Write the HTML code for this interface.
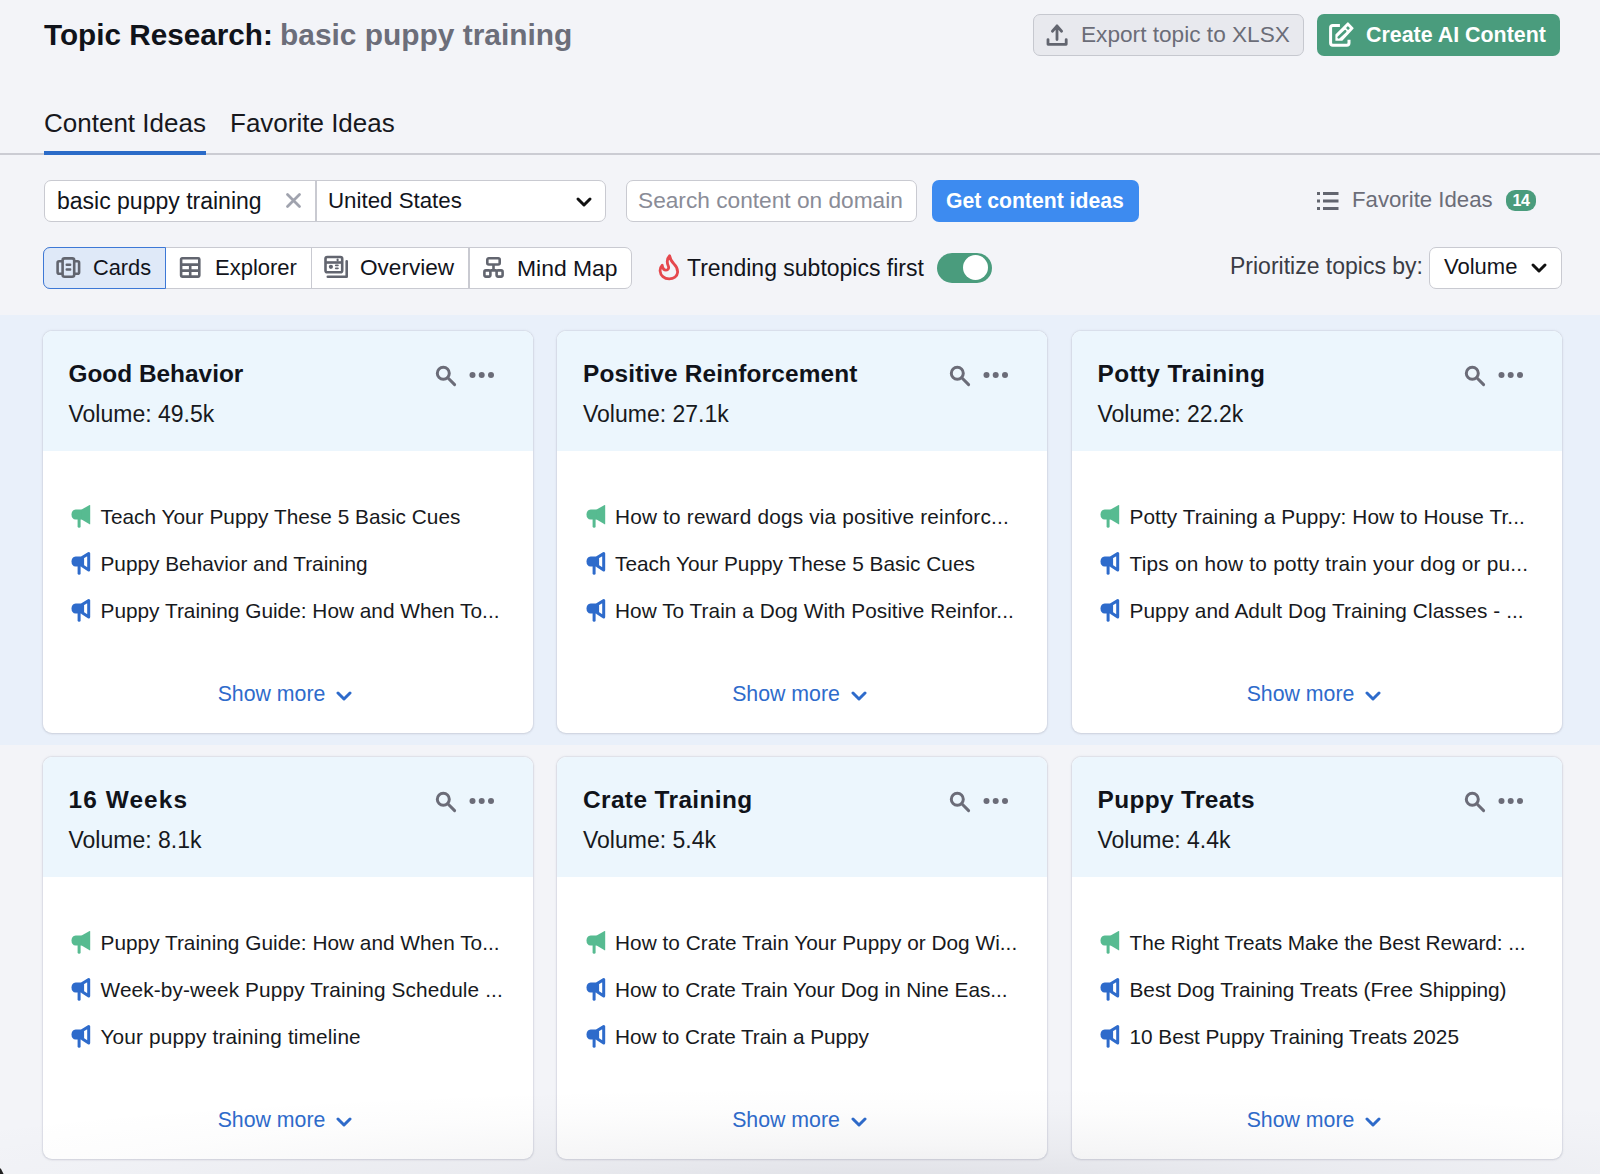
<!DOCTYPE html>
<html><head><meta charset="utf-8"><style>
*{box-sizing:border-box;margin:0;padding:0}
html,body{width:1600px;height:1174px;overflow:hidden}
body{position:relative;background:#f3f4f8;font-family:"Liberation Sans", sans-serif;color:#12141b}
.abs{position:absolute;white-space:nowrap}
.title{left:44px;top:16.5px;font-size:30px;font-weight:bold;line-height:36px;color:#10131a}
.title span{color:#6c6e7a}
.btn{position:absolute;border-radius:7px;height:42px;top:13.5px}
.exp{left:1033px;width:271px;background:#e8e9ee;border:1.5px solid #c6c8cf}
.cai{left:1317px;width:243px;background:#4a9c7d}
.tabs{top:107px;font-size:26px;line-height:32px}
.uline{position:absolute;left:44px;top:151px;width:162px;height:4px;background:#2b6bc8}
.gline{position:absolute;left:0;top:153px;width:1600px;height:2px;background:#cbccd3}
.inp{position:absolute;top:180px;height:42px;background:#fff;border:1.5px solid #c9cad1;border-radius:7px}
.band{position:absolute;left:0;top:315px;width:1600px;height:430px;background:#e9f0fa}
.card{position:absolute;width:490px;height:402px;background:#fff;border-radius:9px;box-shadow:0 0 0 1px rgba(205,208,218,.25),0 0 2px 1px rgba(175,178,192,.22),0 1px 2px rgba(150,152,165,.2);overflow:hidden}
.ch{position:absolute;left:0;top:0;width:100%;height:120px;background:#ecf6fd}
.ct{position:absolute;left:26px;top:28px;font-size:24.4px;font-weight:bold;line-height:30px;white-space:nowrap;color:#10131a}
.cv{position:absolute;left:26px;top:69px;font-size:23px;line-height:28px;white-space:nowrap;color:#171920}
.srch{position:absolute;left:392px;top:34px}
.dots{position:absolute;left:426px;top:39px}
.it{position:absolute;left:29px;height:26px;white-space:nowrap}
.mi{position:absolute;left:-0.2px;top:0}
.itx{position:absolute;left:29px;top:0.2px;font-size:20.8px;line-height:26px;color:#171920}
.sm{position:absolute;left:-2.5px;width:100%;top:349.5px;text-align:center;font-size:21.3px;line-height:26px;color:#2e6bcb;white-space:nowrap}
.seg{position:absolute;top:247px;height:42px;background:#fff;border:1.5px solid #c9cad1;border-radius:7px;left:43px;width:589px;overflow:hidden}
.lbl{font-size:22px;line-height:28px}
</style></head><body>
<div class="abs title" style="font-size:29.7px">Topic Research:</div><div class="abs title" style="left:280px;color:#6c6e7a;font-size:29.9px">basic puppy training</div>

<div class="btn exp"></div>
<svg class="abs" style="left:1044px;top:22px" width="26" height="26" viewBox="0 0 26 26"><path d="M13 4 L13 17.6 M8.4 9.2 L13 4 L17.6 9.2" fill="none" stroke="#62656f" stroke-width="2.8" stroke-linecap="round" stroke-linejoin="round"/><path d="M4 17.6 L4 22.3 L22.2 22.3 L22.2 17.6" fill="none" stroke="#62656f" stroke-width="2.8" stroke-linecap="round" stroke-linejoin="round"/></svg>
<div class="abs lbl" style="left:1081px;top:20px;color:#6b6d78;font-size:22.65px">Export topic to XLSX</div>
<div class="btn cai"></div>
<svg class="abs" style="left:1326px;top:20px" width="32" height="30" viewBox="0 0 32 30"><path d="M13.9 5.6 L6.8 5.6 Q4.6 5.6 4.6 7.8 L4.6 23.1 Q4.6 25.3 6.8 25.3 L20.8 25.3 Q23 25.3 23 23.1 L23 19.7" fill="none" stroke="#fff" stroke-width="3"/><path d="M9.4 20.8 L9.4 14.5 L21.4 2.6 Q21.9 2.1 22.4 2.6 L27.4 7.8 Q27.9 8.3 27.4 8.8 L16.3 20.8 Z" fill="#fff"/><path d="M12.7 17.4 L19.2 11.2" stroke="#4a9c7d" stroke-width="2.6" stroke-linecap="round"/><rect x="20.5" y="6.8" width="3" height="2.6" rx=".6" transform="rotate(45 22 8.1)" fill="#4a9c7d"/></svg>
<div class="abs lbl" style="left:1366px;top:21px;color:#fff;font-weight:bold;font-size:21.4px">Create AI Content</div>

<div class="abs tabs" style="left:44px;color:#17181d">Content Ideas</div>
<div class="abs tabs" style="left:230px;color:#17181d">Favorite Ideas</div>
<div class="gline"></div>
<div class="uline"></div>

<div class="inp" style="left:44px;width:562px"></div>
<div class="abs" style="left:315px;top:181px;width:1.5px;height:40px;background:#c9cad1"></div>
<div class="abs lbl" style="left:57px;top:187px;font-size:23px">basic puppy training</div>
<svg class="abs" style="left:284px;top:192px" width="18" height="18" viewBox="0 0 18 18"><path d="M3.5 2.6 L15.5 14.6 M15.5 2.6 L3.5 14.6" stroke="#a0a3ae" stroke-width="2.8" stroke-linecap="round"/></svg>
<div class="abs lbl" style="left:328px;top:187px;font-size:22.3px">United States</div>
<svg class="abs" style="left:575px;top:195px" width="18" height="14" viewBox="0 0 18 14"><path d="M3 4 L9 10 L15 4" fill="none" stroke="#111" stroke-width="3" stroke-linecap="round" stroke-linejoin="round"/></svg>

<div class="inp" style="left:625.5px;width:291px"></div>
<div class="abs lbl" style="left:638px;top:186px;font-size:22.7px;color:#8a8c97">Search content on domain</div>
<div class="btn" style="left:932px;top:180px;width:207px;height:42px;background:#3d8bf0"></div>
<div class="abs lbl" style="left:946px;top:187.2px;color:#fff;font-weight:bold;font-size:21.2px">Get content ideas</div>

<svg class="abs" style="left:1315px;top:189px" width="26" height="24" viewBox="0 0 26 24"><g fill="#62656f"><rect x="2" y="3" width="3" height="3"/><rect x="2" y="10.5" width="3" height="3"/><rect x="2" y="18" width="3" height="3"/><rect x="8" y="3" width="15.5" height="3"/><rect x="8" y="10.5" width="15.5" height="3"/><rect x="8" y="18" width="15.5" height="3"/></g></svg>
<div class="abs lbl" style="left:1352px;top:186px;color:#6b6d78;font-size:22.2px">Favorite Ideas</div>
<div class="abs" style="left:1506px;top:190px;width:30px;height:21px;border-radius:9px;background:#4a9c7d;color:#fff;font-size:16px;font-weight:bold;line-height:21px;text-align:center;letter-spacing:-0.3px">14</div>

<div class="seg"></div>
<div class="abs" style="left:43px;top:247px;width:123px;height:42px;background:#dfe9f8;border:1.5px solid #3d78d6;border-radius:7px 0 0 7px"></div>
<div class="abs" style="left:310.5px;top:248px;width:1.5px;height:40px;background:#c9cad1"></div>
<div class="abs" style="left:468px;top:248px;width:1.5px;height:40px;background:#c9cad1"></div>
<svg class="abs" style="left:54px;top:255px" width="28" height="24" viewBox="0 0 28 24"><g fill="none" stroke="#62656f" stroke-width="2.6" stroke-linejoin="round"><rect x="8.6" y="3.4" width="11.6" height="18.3" rx="2"/><path d="M8.6 6.3 L5.1 6.3 Q3.6 6.3 3.6 7.8 L3.6 17.3 Q3.6 18.8 5.1 18.8 L8.6 18.8"/><path d="M20.2 6.3 L23.6 6.3 Q25.1 6.3 25.1 7.8 L25.1 17.3 Q25.1 18.8 23.6 18.8 L20.2 18.8"/></g><g stroke="#62656f" stroke-width="2.4" stroke-linecap="round"><path d="M12.7 9.8 L16.2 9.8 M12.7 14.5 L16.2 14.5"/></g></svg>
<div class="abs lbl" style="left:93px;top:253.5px;font-size:21.8px">Cards</div>
<svg class="abs" style="left:178px;top:255px" width="24" height="24" viewBox="0 0 24 24"><g fill="none" stroke="#62656f" stroke-width="2.6"><rect x="3.1" y="3.3" width="18.2" height="18.3" rx="1"/><path d="M3.1 9.6 L21.3 9.6 M3.1 15.6 L21.3 15.6 M12.2 9.6 L12.2 21.6"/></g></svg>
<div class="abs lbl" style="left:215px;top:253.5px">Explorer</div>
<svg class="abs" style="left:322px;top:254px" width="28" height="26" viewBox="0 0 28 26"><g fill="none" stroke="#62656f" stroke-width="2.6" stroke-linejoin="round"><rect x="3.5" y="3" width="16.7" height="15.2" rx="1.8"/><path d="M3.5 8.5 L20.2 8.5"/><path d="M5.8 22.7 L24.7 22.7 L24.7 7.3" stroke-linecap="round"/></g><g fill="#62656f"><circle cx="8.9" cy="12.8" r="2.1"/><rect x="12.9" y="10.45" width="3.9" height="1.8" rx=".9"/><rect x="12.9" y="13.4" width="3.9" height="1.8" rx=".9"/><rect x="14.6" y="4.6" width="2" height="3" rx="1"/></g></svg>
<div class="abs lbl" style="left:360px;top:253.5px;font-size:22.6px">Overview</div>
<svg class="abs" style="left:481px;top:255px" width="26" height="26" viewBox="0 0 26 26"><g fill="none" stroke="#62656f" stroke-width="2.6" stroke-linejoin="round"><rect x="6.3" y="3.3" width="12.4" height="6.2" rx="1.5"/><rect x="3.4" y="15.4" width="6" height="6.2" rx="1.5"/><rect x="15.6" y="15.4" width="6" height="6.2" rx="1.5"/><path d="M12.5 9.5 L12.5 15.4 M9.4 15.4 L15.6 15.4"/></g></svg>
<div class="abs lbl" style="left:517px;top:253.5px;font-size:22.9px">Mind Map</div>

<svg class="abs" style="left:656px;top:253px" width="26" height="28" viewBox="0 0 26 28"><path d="M13.6 2.8 C14.2 6.5 15.5 8.6 18 11 C20.6 13.5 21.8 16 21.6 19.4 C21.3 23.4 17.5 25.8 13.2 25.8 C8.2 25.8 4.4 22.5 4.1 18 C4 15.8 4.8 13.6 6.2 12.2 C6.6 14.8 8 17.2 10 17.2 C12.2 17.2 13.2 15.2 12.3 13 C11 10 10.6 6 13.6 2.8 Z" fill="none" stroke="#e5484d" stroke-width="2.8" stroke-linejoin="round"/></svg>
<div class="abs lbl" style="left:687px;top:253.5px;font-size:23px">Trending subtopics first</div>
<div class="abs" style="left:937px;top:252.5px;width:55px;height:30px;border-radius:15px;background:#4a9c7d"></div>
<div class="abs" style="left:963px;top:255px;width:25px;height:25px;border-radius:50%;background:#fff"></div>

<div class="abs lbl" style="left:1230px;top:252px;color:#3a3c45;font-size:23px">Prioritize topics by:</div>
<div class="inp" style="left:1429px;top:247px;width:133px;height:42px"></div>
<div class="abs lbl" style="left:1444px;top:253px;font-size:22px">Volume</div>
<svg class="abs" style="left:1530px;top:261px" width="18" height="14" viewBox="0 0 18 14"><path d="M3 4 L9 10 L15 4" fill="none" stroke="#111" stroke-width="3" stroke-linecap="round" stroke-linejoin="round"/></svg>

<div class="band"></div>
<div class="card" style="left:42.5px;top:331px">
<div class="ch"><div class="ct" style="letter-spacing:0px">Good Behavior</div><div class="cv">Volume: 49.5k</div>
<svg class="srch" width="24" height="24" viewBox="0 0 24 24"><circle cx="8.3" cy="8.3" r="6" fill="none" stroke="#6b6c78" stroke-width="3"/><path d="M12.8 12.8 L19.6 19.6" stroke="#6b6c78" stroke-width="3" stroke-linecap="round"/></svg>
<svg class="dots" width="26" height="10" viewBox="0 0 26 10"><circle cx="3.5" cy="5" r="3" fill="#6b6c78"/><circle cx="12.7" cy="5" r="3" fill="#6b6c78"/><circle cx="22" cy="5" r="3" fill="#6b6c78"/></svg>
</div>
<div class="it" style="top:173px"><span class="mi"><svg width="20" height="24" viewBox="0 0 20 24"><path d="M4.6 5.5 L11.3 5.5 L11.3 15.6 L4.6 15.6 Q0.6 15.2 0.5 10.5 Q0.6 5.9 4.6 5.5 Z" fill="#57bb91"/><path d="M10.6 5.6 L18.6 1.1 Q19.2 0.9 19.2 1.6 L19.2 19.9 Q19.2 20.6 18.6 20.3 L10.6 15.6 Z" fill="#57bb91"/><path d="M8.1 15.5 L8.1 22.3" stroke="#57bb91" stroke-width="3" stroke-linecap="round"/></svg></span><span class="itx" style="letter-spacing:0.021px">Teach Your Puppy These 5 Basic Cues</span></div><div class="it" style="top:220px"><span class="mi"><svg width="20" height="24" viewBox="0 0 20 24"><path d="M4.6 5.5 L11.3 5.5 L11.3 15.6 L4.6 15.6 Q0.6 15.2 0.5 10.5 Q0.6 5.9 4.6 5.5 Z" fill="#2e6bcb"/><path d="M11.6 6.3 L17.7 2.6 L17.7 18.9 L11.6 14.9 Z" fill="none" stroke="#2e6bcb" stroke-width="3" stroke-linejoin="round"/><path d="M8.1 15.5 L8.1 22.3" stroke="#2e6bcb" stroke-width="3" stroke-linecap="round"/></svg></span><span class="itx" style="letter-spacing:0.0px">Puppy Behavior and Training</span></div><div class="it" style="top:267px"><span class="mi"><svg width="20" height="24" viewBox="0 0 20 24"><path d="M4.6 5.5 L11.3 5.5 L11.3 15.6 L4.6 15.6 Q0.6 15.2 0.5 10.5 Q0.6 5.9 4.6 5.5 Z" fill="#2e6bcb"/><path d="M11.6 6.3 L17.7 2.6 L17.7 18.9 L11.6 14.9 Z" fill="none" stroke="#2e6bcb" stroke-width="3" stroke-linejoin="round"/><path d="M8.1 15.5 L8.1 22.3" stroke="#2e6bcb" stroke-width="3" stroke-linecap="round"/></svg></span><span class="itx" style="letter-spacing:0.013px">Puppy Training Guide: How and When To...</span></div>
<div class="sm">Show more<svg width="16" height="10" viewBox="0 0 16 10" style="margin-left:11px"><path d="M2 2 L8 8 L14 2" fill="none" stroke="#2e6bcb" stroke-width="3" stroke-linecap="round" stroke-linejoin="round"/></svg></div>
</div><div class="card" style="left:557px;top:331px">
<div class="ch"><div class="ct" style="letter-spacing:0.16px">Positive Reinforcement</div><div class="cv">Volume: 27.1k</div>
<svg class="srch" width="24" height="24" viewBox="0 0 24 24"><circle cx="8.3" cy="8.3" r="6" fill="none" stroke="#6b6c78" stroke-width="3"/><path d="M12.8 12.8 L19.6 19.6" stroke="#6b6c78" stroke-width="3" stroke-linecap="round"/></svg>
<svg class="dots" width="26" height="10" viewBox="0 0 26 10"><circle cx="3.5" cy="5" r="3" fill="#6b6c78"/><circle cx="12.7" cy="5" r="3" fill="#6b6c78"/><circle cx="22" cy="5" r="3" fill="#6b6c78"/></svg>
</div>
<div class="it" style="top:173px"><span class="mi"><svg width="20" height="24" viewBox="0 0 20 24"><path d="M4.6 5.5 L11.3 5.5 L11.3 15.6 L4.6 15.6 Q0.6 15.2 0.5 10.5 Q0.6 5.9 4.6 5.5 Z" fill="#57bb91"/><path d="M10.6 5.6 L18.6 1.1 Q19.2 0.9 19.2 1.6 L19.2 19.9 Q19.2 20.6 18.6 20.3 L10.6 15.6 Z" fill="#57bb91"/><path d="M8.1 15.5 L8.1 22.3" stroke="#57bb91" stroke-width="3" stroke-linecap="round"/></svg></span><span class="itx" style="letter-spacing:0.183px">How to reward dogs via positive reinforc...</span></div><div class="it" style="top:220px"><span class="mi"><svg width="20" height="24" viewBox="0 0 20 24"><path d="M4.6 5.5 L11.3 5.5 L11.3 15.6 L4.6 15.6 Q0.6 15.2 0.5 10.5 Q0.6 5.9 4.6 5.5 Z" fill="#2e6bcb"/><path d="M11.6 6.3 L17.7 2.6 L17.7 18.9 L11.6 14.9 Z" fill="none" stroke="#2e6bcb" stroke-width="3" stroke-linejoin="round"/><path d="M8.1 15.5 L8.1 22.3" stroke="#2e6bcb" stroke-width="3" stroke-linecap="round"/></svg></span><span class="itx" style="letter-spacing:0.021px">Teach Your Puppy These 5 Basic Cues</span></div><div class="it" style="top:267px"><span class="mi"><svg width="20" height="24" viewBox="0 0 20 24"><path d="M4.6 5.5 L11.3 5.5 L11.3 15.6 L4.6 15.6 Q0.6 15.2 0.5 10.5 Q0.6 5.9 4.6 5.5 Z" fill="#2e6bcb"/><path d="M11.6 6.3 L17.7 2.6 L17.7 18.9 L11.6 14.9 Z" fill="none" stroke="#2e6bcb" stroke-width="3" stroke-linejoin="round"/><path d="M8.1 15.5 L8.1 22.3" stroke="#2e6bcb" stroke-width="3" stroke-linecap="round"/></svg></span><span class="itx" style="letter-spacing:0.036px">How To Train a Dog With Positive Reinfor...</span></div>
<div class="sm">Show more<svg width="16" height="10" viewBox="0 0 16 10" style="margin-left:11px"><path d="M2 2 L8 8 L14 2" fill="none" stroke="#2e6bcb" stroke-width="3" stroke-linecap="round" stroke-linejoin="round"/></svg></div>
</div><div class="card" style="left:1071.5px;top:331px">
<div class="ch"><div class="ct" style="letter-spacing:0.36px">Potty Training</div><div class="cv">Volume: 22.2k</div>
<svg class="srch" width="24" height="24" viewBox="0 0 24 24"><circle cx="8.3" cy="8.3" r="6" fill="none" stroke="#6b6c78" stroke-width="3"/><path d="M12.8 12.8 L19.6 19.6" stroke="#6b6c78" stroke-width="3" stroke-linecap="round"/></svg>
<svg class="dots" width="26" height="10" viewBox="0 0 26 10"><circle cx="3.5" cy="5" r="3" fill="#6b6c78"/><circle cx="12.7" cy="5" r="3" fill="#6b6c78"/><circle cx="22" cy="5" r="3" fill="#6b6c78"/></svg>
</div>
<div class="it" style="top:173px"><span class="mi"><svg width="20" height="24" viewBox="0 0 20 24"><path d="M4.6 5.5 L11.3 5.5 L11.3 15.6 L4.6 15.6 Q0.6 15.2 0.5 10.5 Q0.6 5.9 4.6 5.5 Z" fill="#57bb91"/><path d="M10.6 5.6 L18.6 1.1 Q19.2 0.9 19.2 1.6 L19.2 19.9 Q19.2 20.6 18.6 20.3 L10.6 15.6 Z" fill="#57bb91"/><path d="M8.1 15.5 L8.1 22.3" stroke="#57bb91" stroke-width="3" stroke-linecap="round"/></svg></span><span class="itx" style="letter-spacing:0.085px">Potty Training a Puppy: How to House Tr...</span></div><div class="it" style="top:220px"><span class="mi"><svg width="20" height="24" viewBox="0 0 20 24"><path d="M4.6 5.5 L11.3 5.5 L11.3 15.6 L4.6 15.6 Q0.6 15.2 0.5 10.5 Q0.6 5.9 4.6 5.5 Z" fill="#2e6bcb"/><path d="M11.6 6.3 L17.7 2.6 L17.7 18.9 L11.6 14.9 Z" fill="none" stroke="#2e6bcb" stroke-width="3" stroke-linejoin="round"/><path d="M8.1 15.5 L8.1 22.3" stroke="#2e6bcb" stroke-width="3" stroke-linecap="round"/></svg></span><span class="itx" style="letter-spacing:0.226px">Tips on how to potty train your dog or pu...</span></div><div class="it" style="top:267px"><span class="mi"><svg width="20" height="24" viewBox="0 0 20 24"><path d="M4.6 5.5 L11.3 5.5 L11.3 15.6 L4.6 15.6 Q0.6 15.2 0.5 10.5 Q0.6 5.9 4.6 5.5 Z" fill="#2e6bcb"/><path d="M11.6 6.3 L17.7 2.6 L17.7 18.9 L11.6 14.9 Z" fill="none" stroke="#2e6bcb" stroke-width="3" stroke-linejoin="round"/><path d="M8.1 15.5 L8.1 22.3" stroke="#2e6bcb" stroke-width="3" stroke-linecap="round"/></svg></span><span class="itx" style="letter-spacing:0.083px">Puppy and Adult Dog Training Classes - ...</span></div>
<div class="sm">Show more<svg width="16" height="10" viewBox="0 0 16 10" style="margin-left:11px"><path d="M2 2 L8 8 L14 2" fill="none" stroke="#2e6bcb" stroke-width="3" stroke-linecap="round" stroke-linejoin="round"/></svg></div>
</div><div class="card" style="left:42.5px;top:757px">
<div class="ch"><div class="ct" style="letter-spacing:1.1px">16 Weeks</div><div class="cv">Volume: 8.1k</div>
<svg class="srch" width="24" height="24" viewBox="0 0 24 24"><circle cx="8.3" cy="8.3" r="6" fill="none" stroke="#6b6c78" stroke-width="3"/><path d="M12.8 12.8 L19.6 19.6" stroke="#6b6c78" stroke-width="3" stroke-linecap="round"/></svg>
<svg class="dots" width="26" height="10" viewBox="0 0 26 10"><circle cx="3.5" cy="5" r="3" fill="#6b6c78"/><circle cx="12.7" cy="5" r="3" fill="#6b6c78"/><circle cx="22" cy="5" r="3" fill="#6b6c78"/></svg>
</div>
<div class="it" style="top:173px"><span class="mi"><svg width="20" height="24" viewBox="0 0 20 24"><path d="M4.6 5.5 L11.3 5.5 L11.3 15.6 L4.6 15.6 Q0.6 15.2 0.5 10.5 Q0.6 5.9 4.6 5.5 Z" fill="#57bb91"/><path d="M10.6 5.6 L18.6 1.1 Q19.2 0.9 19.2 1.6 L19.2 19.9 Q19.2 20.6 18.6 20.3 L10.6 15.6 Z" fill="#57bb91"/><path d="M8.1 15.5 L8.1 22.3" stroke="#57bb91" stroke-width="3" stroke-linecap="round"/></svg></span><span class="itx" style="letter-spacing:0.015px">Puppy Training Guide: How and When To...</span></div><div class="it" style="top:220px"><span class="mi"><svg width="20" height="24" viewBox="0 0 20 24"><path d="M4.6 5.5 L11.3 5.5 L11.3 15.6 L4.6 15.6 Q0.6 15.2 0.5 10.5 Q0.6 5.9 4.6 5.5 Z" fill="#2e6bcb"/><path d="M11.6 6.3 L17.7 2.6 L17.7 18.9 L11.6 14.9 Z" fill="none" stroke="#2e6bcb" stroke-width="3" stroke-linejoin="round"/><path d="M8.1 15.5 L8.1 22.3" stroke="#2e6bcb" stroke-width="3" stroke-linecap="round"/></svg></span><span class="itx" style="letter-spacing:0.128px">Week-by-week Puppy Training Schedule ...</span></div><div class="it" style="top:267px"><span class="mi"><svg width="20" height="24" viewBox="0 0 20 24"><path d="M4.6 5.5 L11.3 5.5 L11.3 15.6 L4.6 15.6 Q0.6 15.2 0.5 10.5 Q0.6 5.9 4.6 5.5 Z" fill="#2e6bcb"/><path d="M11.6 6.3 L17.7 2.6 L17.7 18.9 L11.6 14.9 Z" fill="none" stroke="#2e6bcb" stroke-width="3" stroke-linejoin="round"/><path d="M8.1 15.5 L8.1 22.3" stroke="#2e6bcb" stroke-width="3" stroke-linecap="round"/></svg></span><span class="itx" style="letter-spacing:0.159px">Your puppy training timeline</span></div>
<div class="sm">Show more<svg width="16" height="10" viewBox="0 0 16 10" style="margin-left:11px"><path d="M2 2 L8 8 L14 2" fill="none" stroke="#2e6bcb" stroke-width="3" stroke-linecap="round" stroke-linejoin="round"/></svg></div>
</div><div class="card" style="left:557px;top:757px">
<div class="ch"><div class="ct" style="letter-spacing:0.4px">Crate Training</div><div class="cv">Volume: 5.4k</div>
<svg class="srch" width="24" height="24" viewBox="0 0 24 24"><circle cx="8.3" cy="8.3" r="6" fill="none" stroke="#6b6c78" stroke-width="3"/><path d="M12.8 12.8 L19.6 19.6" stroke="#6b6c78" stroke-width="3" stroke-linecap="round"/></svg>
<svg class="dots" width="26" height="10" viewBox="0 0 26 10"><circle cx="3.5" cy="5" r="3" fill="#6b6c78"/><circle cx="12.7" cy="5" r="3" fill="#6b6c78"/><circle cx="22" cy="5" r="3" fill="#6b6c78"/></svg>
</div>
<div class="it" style="top:173px"><span class="mi"><svg width="20" height="24" viewBox="0 0 20 24"><path d="M4.6 5.5 L11.3 5.5 L11.3 15.6 L4.6 15.6 Q0.6 15.2 0.5 10.5 Q0.6 5.9 4.6 5.5 Z" fill="#57bb91"/><path d="M10.6 5.6 L18.6 1.1 Q19.2 0.9 19.2 1.6 L19.2 19.9 Q19.2 20.6 18.6 20.3 L10.6 15.6 Z" fill="#57bb91"/><path d="M8.1 15.5 L8.1 22.3" stroke="#57bb91" stroke-width="3" stroke-linecap="round"/></svg></span><span class="itx" style="letter-spacing:0.027px">How to Crate Train Your Puppy or Dog Wi...</span></div><div class="it" style="top:220px"><span class="mi"><svg width="20" height="24" viewBox="0 0 20 24"><path d="M4.6 5.5 L11.3 5.5 L11.3 15.6 L4.6 15.6 Q0.6 15.2 0.5 10.5 Q0.6 5.9 4.6 5.5 Z" fill="#2e6bcb"/><path d="M11.6 6.3 L17.7 2.6 L17.7 18.9 L11.6 14.9 Z" fill="none" stroke="#2e6bcb" stroke-width="3" stroke-linejoin="round"/><path d="M8.1 15.5 L8.1 22.3" stroke="#2e6bcb" stroke-width="3" stroke-linecap="round"/></svg></span><span class="itx" style="letter-spacing:-0.039px">How to Crate Train Your Dog in Nine Eas...</span></div><div class="it" style="top:267px"><span class="mi"><svg width="20" height="24" viewBox="0 0 20 24"><path d="M4.6 5.5 L11.3 5.5 L11.3 15.6 L4.6 15.6 Q0.6 15.2 0.5 10.5 Q0.6 5.9 4.6 5.5 Z" fill="#2e6bcb"/><path d="M11.6 6.3 L17.7 2.6 L17.7 18.9 L11.6 14.9 Z" fill="none" stroke="#2e6bcb" stroke-width="3" stroke-linejoin="round"/><path d="M8.1 15.5 L8.1 22.3" stroke="#2e6bcb" stroke-width="3" stroke-linecap="round"/></svg></span><span class="itx" style="letter-spacing:-0.06px">How to Crate Train a Puppy</span></div>
<div class="sm">Show more<svg width="16" height="10" viewBox="0 0 16 10" style="margin-left:11px"><path d="M2 2 L8 8 L14 2" fill="none" stroke="#2e6bcb" stroke-width="3" stroke-linecap="round" stroke-linejoin="round"/></svg></div>
</div><div class="card" style="left:1071.5px;top:757px">
<div class="ch"><div class="ct" style="letter-spacing:0.36px">Puppy Treats</div><div class="cv">Volume: 4.4k</div>
<svg class="srch" width="24" height="24" viewBox="0 0 24 24"><circle cx="8.3" cy="8.3" r="6" fill="none" stroke="#6b6c78" stroke-width="3"/><path d="M12.8 12.8 L19.6 19.6" stroke="#6b6c78" stroke-width="3" stroke-linecap="round"/></svg>
<svg class="dots" width="26" height="10" viewBox="0 0 26 10"><circle cx="3.5" cy="5" r="3" fill="#6b6c78"/><circle cx="12.7" cy="5" r="3" fill="#6b6c78"/><circle cx="22" cy="5" r="3" fill="#6b6c78"/></svg>
</div>
<div class="it" style="top:173px"><span class="mi"><svg width="20" height="24" viewBox="0 0 20 24"><path d="M4.6 5.5 L11.3 5.5 L11.3 15.6 L4.6 15.6 Q0.6 15.2 0.5 10.5 Q0.6 5.9 4.6 5.5 Z" fill="#57bb91"/><path d="M10.6 5.6 L18.6 1.1 Q19.2 0.9 19.2 1.6 L19.2 19.9 Q19.2 20.6 18.6 20.3 L10.6 15.6 Z" fill="#57bb91"/><path d="M8.1 15.5 L8.1 22.3" stroke="#57bb91" stroke-width="3" stroke-linecap="round"/></svg></span><span class="itx" style="letter-spacing:-0.068px">The Right Treats Make the Best Reward: ...</span></div><div class="it" style="top:220px"><span class="mi"><svg width="20" height="24" viewBox="0 0 20 24"><path d="M4.6 5.5 L11.3 5.5 L11.3 15.6 L4.6 15.6 Q0.6 15.2 0.5 10.5 Q0.6 5.9 4.6 5.5 Z" fill="#2e6bcb"/><path d="M11.6 6.3 L17.7 2.6 L17.7 18.9 L11.6 14.9 Z" fill="none" stroke="#2e6bcb" stroke-width="3" stroke-linejoin="round"/><path d="M8.1 15.5 L8.1 22.3" stroke="#2e6bcb" stroke-width="3" stroke-linecap="round"/></svg></span><span class="itx" style="letter-spacing:-0.026px">Best Dog Training Treats (Free Shipping)</span></div><div class="it" style="top:267px"><span class="mi"><svg width="20" height="24" viewBox="0 0 20 24"><path d="M4.6 5.5 L11.3 5.5 L11.3 15.6 L4.6 15.6 Q0.6 15.2 0.5 10.5 Q0.6 5.9 4.6 5.5 Z" fill="#2e6bcb"/><path d="M11.6 6.3 L17.7 2.6 L17.7 18.9 L11.6 14.9 Z" fill="none" stroke="#2e6bcb" stroke-width="3" stroke-linejoin="round"/><path d="M8.1 15.5 L8.1 22.3" stroke="#2e6bcb" stroke-width="3" stroke-linecap="round"/></svg></span><span class="itx" style="letter-spacing:-0.036px">10 Best Puppy Training Treats 2025</span></div>
<div class="sm">Show more<svg width="16" height="10" viewBox="0 0 16 10" style="margin-left:11px"><path d="M2 2 L8 8 L14 2" fill="none" stroke="#2e6bcb" stroke-width="3" stroke-linecap="round" stroke-linejoin="round"/></svg></div>
</div>
<div class="abs" style="left:0;top:1074px;width:1600px;height:100px;background:radial-gradient(ellipse 1150px 100px at 900px 112px,rgba(40,40,60,.1) 0%,rgba(40,40,60,.045) 40%,rgba(40,40,60,.012) 75%,rgba(40,40,60,0) 100%);pointer-events:none"></div><svg class="abs" style="left:0;top:1166px" width="6" height="8" viewBox="0 0 6 8"><path d="M0 2.5 L0.8 2.5 L3.6 8 L0 8 Z" fill="#222"/></svg>
</body></html>
